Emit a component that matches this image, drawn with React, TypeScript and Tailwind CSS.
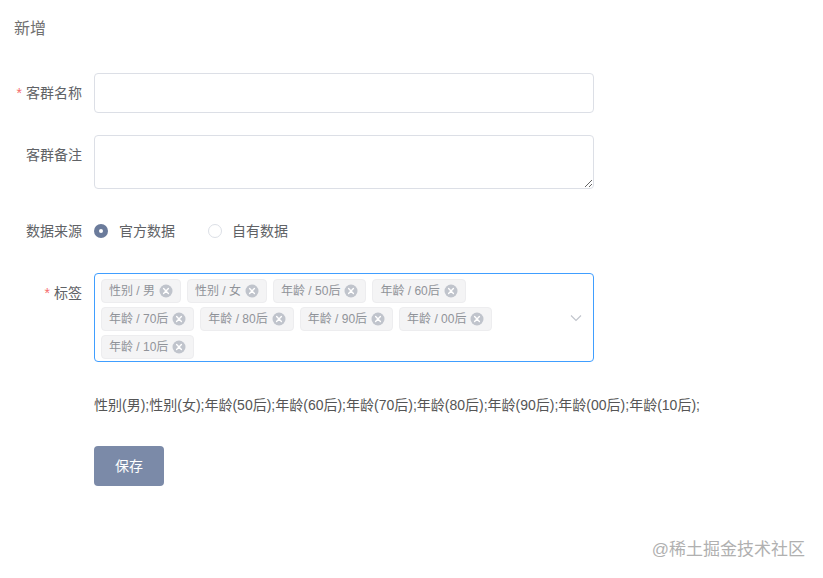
import React from "react";

const font = { fontFamily: '"Liberation Sans", "Noto Sans CJK SC", sans-serif' };

const tags = [
  "性别 / 男",
  "性别 / 女",
  "年龄 / 50后",
  "年龄 / 60后",
  "年龄 / 70后",
  "年龄 / 80后",
  "年龄 / 90后",
  "年龄 / 00后",
  "年龄 / 10后",
];

function CloseIcon() {
  return (
    <svg width="14" height="14" viewBox="0 0 14 14" className="ml-[4px] shrink-0">
      <circle cx="7" cy="7" r="6.5" fill="#c0c4cc" />
      <path d="M4.6 4.6 L9.4 9.4 M9.4 4.6 L4.6 9.4" stroke="#fff" strokeWidth="1.4" strokeLinecap="round" />
    </svg>
  );
}

function Label({ text, required }: { text: string; required?: boolean }) {
  return (
    <div className="w-[80px] shrink-0 pr-3 text-right text-[14px] leading-[40px] text-[#606266]">
      {required && <span className="mr-[4px] text-[#f56c6c]">*</span>}
      {text}
    </div>
  );
}

export default function App() {
  return (
    <div className="relative h-[578px] w-[823px] bg-white pl-[14px] pt-[17px]" style={font}>
      <div className="text-[16px] leading-6 text-[#707070]">新增</div>

      <div className="mt-[32px] flex flex-col gap-[22px]">
        <div className="flex">
          <Label text="客群名称" required />
          <input className="h-[40px] w-[500px] rounded-[4px] border border-[#dcdfe6] bg-white px-[15px] text-[14px] outline-none" />
        </div>

        <div className="flex">
          <Label text="客群备注" />
          <textarea
            rows={2}
            className="block h-[54px] w-[500px] rounded-[4px] border border-[#dcdfe6] bg-white px-[15px] py-[5px] text-[14px] outline-none"
          />
        </div>

        <div className="flex">
          <Label text="数据来源" />
          <div className="flex h-[40px] items-center text-[14px] text-[#606266]">
            <div className="flex items-center">
              <span className="flex h-[14px] w-[14px] items-center justify-center rounded-full bg-[#6b7b9b]">
                <span className="h-[4px] w-[4px] rounded-full bg-white" />
              </span>
              <span className="ml-[11px]">官方数据</span>
            </div>
            <div className="ml-[33px] flex items-center">
              <span className="h-[14px] w-[14px] rounded-full border border-[#dcdfe6] bg-white" />
              <span className="ml-[10px]">自有数据</span>
            </div>
          </div>
        </div>

        <div className="flex">
          <Label text="标签" required />
          <div className="relative h-[89px] w-[500px] rounded-[4px] border border-[#409eff] bg-white">
            <div className="flex w-[470px] flex-wrap pt-[3px]">
              {tags.map((t) => (
                <div
                  key={t}
                  className="my-[2px] ml-[6px] flex h-[24px] items-center rounded-[4px] border border-[#ededef] bg-[#f4f4f5] px-[7px] text-[12px] text-[#909399]"
                >
                  <span className="whitespace-pre">{t}</span>
                  <CloseIcon />
                </div>
              ))}
            </div>
            <svg
              width="12"
              height="8"
              viewBox="0 0 12 8"
              className="absolute right-[11px] top-[40px]"
            >
              <path d="M1 1.5 L6 6.5 L11 1.5" fill="none" stroke="#c0c4cc" strokeWidth="1.1" />
            </svg>
          </div>
        </div>

        <div className="flex">
          <div className="w-[80px] shrink-0" />
          <div className="h-[40px] text-[14px] leading-[42px] text-[#555]">
            性别(男);性别(女);年龄(50后);年龄(60后);年龄(70后);年龄(80后);年龄(90后);年龄(00后);年龄(10后);
          </div>
        </div>

        <div className="flex">
          <div className="w-[80px] shrink-0" />
          <button className="h-[40px] w-[70px] rounded-[4px] bg-[#7b8aa8] text-[14px] text-white">
            保存
          </button>
        </div>
      </div>

      <div className="absolute bottom-[16px] right-[18px] text-[17px] text-[#b0b0b0]">@稀土掘金技术社区</div>
    </div>
  );
}
